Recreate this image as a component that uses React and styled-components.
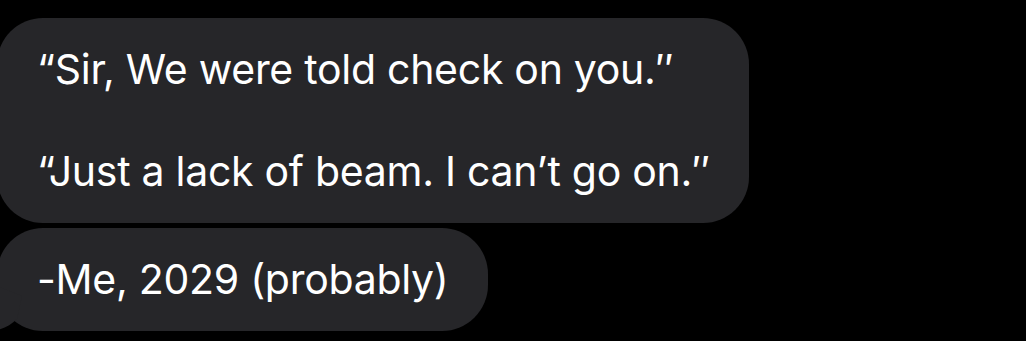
import React from "react";
import styled, { createGlobalStyle } from "styled-components";

const GlobalStyle = createGlobalStyle`
  html, body {
    margin: 0;
    padding: 0;
    background: #000000;
    overflow: hidden;
  }
  body {
    width: 1026px;
    height: 341px;
  }
`;

const Thread = styled.div`
  display: flex;
  flex-direction: column;
  align-items: flex-start;
  gap: 5px;
  padding-top: 18px;
  margin-left: -3px;
`;

const Bubble = styled.div`
  position: relative;
  background: #262629;
  color: #ffffff;
  border-radius: 46px;
  padding: 26px 39px 26px 40px;
  font-family: Inter, "Liberation Sans", sans-serif;
  font-size: 41px;
  line-height: 51px;
  letter-spacing: -0.28px;
  white-space: pre-line;
`;

const Tail = styled.svg`
  position: absolute;
  left: -11px;
  bottom: -1px;
  width: 40px;
  height: 46px;
  fill: #262629;
`;

const Message = ({ text, tail }) => (
  <Bubble>
    {text}
    {tail && (
      <Tail viewBox="0 0 40 46">
        <path d="M11 0 L11 14 C11 32 7 40 0 45 C12 45.5 23 41 31 33 L36 10 Z" />
      </Tail>
    )}
  </Bubble>
);

export default function App() {
  return (
    <>
      <GlobalStyle />
      <Thread>
        <Message
          text={"\u201CSir, We were told check on you.\u2033\n\n\u201CJust a lack of beam. I can\u2019t go on.\u2033"}
        />
        <Message text="-Me, 2029 (probably)" tail />
      </Thread>
    </>
  );
}
